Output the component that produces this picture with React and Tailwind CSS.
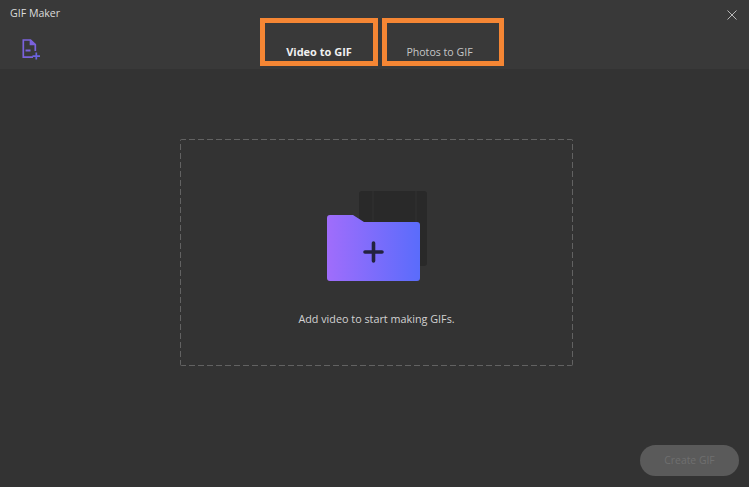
export default function App() {
  return (
    <div className="relative w-[749px] h-[487px] overflow-hidden bg-[#333333] flex flex-col text-[#e6e6e6]" style={{ fontFamily: '"Open Sans", "Noto Sans", sans-serif' }}>
      <header className="h-[69px] bg-[#393939] relative shrink-0 flex">
        <div className="w-[260px] shrink-0 flex flex-col">
          <div className="pl-[10px] pt-[5px] text-[10.6px] leading-[16px] text-[#dcdcdc]">GIF Maker</div>
          <svg className="ml-[22px] mt-[18px]" width="19" height="21" viewBox="0 0 19 21" fill="none" stroke="#7b62dc" strokeWidth="1.7">
            <path d="M11 18.2H1.3V1H8.5L13.3 5.5V12" />
            <path d="M8.5 1V5.5H13.3" fill="#7b62dc" />
            <path d="M3.5 11.5H8.5" strokeWidth="2" />
            <path d="M10.5 17.2H18M14.3 13.5V20.5" stroke="#6a63e0" />
          </svg>
        </div>
        <div className="flex mt-[18px] h-[48px] gap-[4px]">
          <div className="w-[118px] h-[48px] border-[5px] border-[#f58634] flex items-end justify-center pb-[1px] text-[11px] leading-[16px] font-bold text-[#f0f0f0]">Video to GIF</div>
          <div className="w-[122px] h-[48px] border-[5px] border-[#f58634] flex items-end justify-center pb-[1px] pr-[7px] text-[10.6px] leading-[16px] text-[#c6c6c6]">Photos to GIF</div>
        </div>
        <svg className="absolute left-[727px] top-[10px]" width="10" height="10" viewBox="0 0 10 10" stroke="#b8b8b8" strokeWidth="1">
          <path d="M0.5 0.5L9.5 9.5M9.5 0.5L0.5 9.5" />
        </svg>
      </header>
      <main className="flex-1 relative">
        <div className="ml-[180px] mt-[70px] w-[393px] h-[227px] rounded-[2px] flex flex-col items-center bg-no-repeat [background-image:repeating-linear-gradient(90deg,#626262_0_6px,transparent_6px_9px),repeating-linear-gradient(90deg,#626262_0_6px,transparent_6px_9px),repeating-linear-gradient(0deg,#626262_0_6px,transparent_6px_9px),repeating-linear-gradient(0deg,#626262_0_6px,transparent_6px_9px)] [background-size:100%_1px,100%_1px,1px_100%,1px_100%] [background-position:0_0,0_100%,0_0,100%_0]">
          <svg className="mt-[52px] ml-[3px]" width="102" height="91" viewBox="0 0 102 91" fill="none">
            <defs>
              <linearGradient id="folder" x1="0" y1="0" x2="1" y2="0">
                <stop offset="0" stopColor="#a06dfb" />
                <stop offset="1" stopColor="#5a6cfb" />
              </linearGradient>
            </defs>
            <rect x="32" y="0" width="68" height="75" rx="3" fill="#292929" />
            <path d="M46 0V30M89 0V75" stroke="#333333" strokeWidth="1" />
            <path d="M3 24H26L37 31H90A3 3 0 0 1 93 34V87A3 3 0 0 1 90 90H3A3 3 0 0 1 0 87V27A3 3 0 0 1 3 24Z" fill="url(#folder)" />
            <path d="M38 61H55M46.5 52V70" stroke="#232340" strokeWidth="3.6" strokeLinecap="round" />
          </svg>
          <div className="mt-[29px] text-[10.8px] leading-[16px] text-[#d2d2d2]">Add video to start making GIFs.</div>
        </div>
        <button className="absolute left-[640px] top-[376px] w-[99px] h-[31px] rounded-full bg-[#5a5a5a] text-[10.4px] text-[#6f6f6f]">Create GIF</button>
      </main>
    </div>
  );
}
